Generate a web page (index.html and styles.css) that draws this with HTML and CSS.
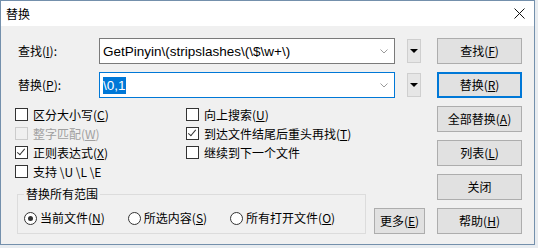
FILE: index.html
```html
<!DOCTYPE html>
<html lang="zh-CN">

<head>
    <meta charset="UTF-8">
    <meta name="viewport" content="width=device-width, initial-scale=1.0">
    <title>替换</title>
    <link rel="stylesheet" href="styles.css">
</head>

<body>
    <div class="window">
        <div class="titlebar">
            <span class="title">替换</span>
            <svg class="close" width="11" height="11" viewBox="0 0 11 11">
                <path d="M0.5 0.5 L10.5 10.5 M10.5 0.5 L0.5 10.5" stroke="#111" stroke-width="1" fill="none" />
            </svg>
        </div>

        <div class="content">
            <div class="left">
                <div class="field-row">
                    <label class="field-label">查找(<u>I</u>):</label>
                    <div class="combo">
                        <span class="combo-text">GetPinyin\(stripslashes\(\$\w+\)</span>
                        <svg class="chevron" width="8" height="5" viewBox="0 0 8 5">
                            <path d="M0.5 0.5 L4 4 L7.5 0.5" stroke="#9a9a9a" fill="none" />
                        </svg>
                    </div>
                    <div class="drop-btn"><span class="tri"></span></div>
                </div>
                <div class="field-row second">
                    <label class="field-label">替换(<u>P</u>):</label>
                    <div class="combo focused">
                        <span class="combo-text"><span class="selected">\0,1</span></span>
                        <svg class="chevron" width="8" height="5" viewBox="0 0 8 5">
                            <path d="M0.5 0.5 L4 4 L7.5 0.5" stroke="#9a9a9a" fill="none" />
                        </svg>
                    </div>
                    <div class="drop-btn"><span class="tri"></span></div>
                </div>

                <div class="options">
                    <div class="opt"><span class="box"></span>区分大小写(<u>C</u>)</div>
                    <div class="opt"><span class="box"></span>向上搜索(<u>U</u>)</div>
                    <div class="opt disabled"><span class="box"></span>整字匹配(<u>W</u>)</div>
                    <div class="opt"><span class="box checked"></span>到达文件结尾后重头再找(<u>T</u>)</div>
                    <div class="opt"><span class="box checked"></span>正则表达式(<u>X</u>)</div>
                    <div class="opt"><span class="box"></span>继续到下一个文件</div>
                    <div class="opt"><span class="box"></span>支持 \U \L \E</div>
                </div>

                <div class="bottom-row">
                    <fieldset class="scope">
                        <legend>替换所有范围</legend>
                        <div class="radios">
                            <div class="radio-item"><span class="radio on"></span>当前文件(<u>N</u>)</div>
                            <div class="radio-item"><span class="radio"></span>所选内容(<u>S</u>)</div>
                            <div class="radio-item"><span class="radio"></span>所有打开文件(<u>O</u>)</div>
                        </div>
                    </fieldset>
                    <button class="btn more">更多(<u>E</u>)</button>
                </div>
            </div>

            <div class="right">
                <button class="btn">查找(<u>F</u>)</button>
                <button class="btn default">替换(<u>R</u>)</button>
                <button class="btn">全部替换(<u>A</u>)</button>
                <button class="btn">列表(<u>L</u>)</button>
                <button class="btn">关闭</button>
                <button class="btn">帮助(<u>H</u>)</button>
            </div>
        </div>
    </div>
</body>

</html>
```

FILE: styles.css
```css
body {
    margin: 0;
    background-color: #e8ecf0;
    font-family: "Noto Sans CJK SC", "Noto Sans", sans-serif;
    font-size: 12px;
    color: #000;
}

u {
    text-decoration: underline;
    text-underline-offset: 1px;
}

.window {
    width: 533px;
    height: 243px;
    border: 1px solid #7490ac;
    background-color: #f0f0f0;
    display: flex;
    flex-direction: column;
}

.titlebar {
    height: 25px;
    background-color: #ffffff;
    display: flex;
    align-items: center;
    justify-content: space-between;
    padding: 0 9px 0 5px;
}

.title {
    font-size: 12px;
    line-height: 14px;
    padding-top: 1px;
}

.content {
    display: flex;
    padding-top: 12px;
}

.left {
    width: 435px;
}

.field-row {
    display: flex;
    align-items: center;
    height: 26px;
    margin-left: 17px;
}

.field-row.second {
    margin-top: 8px;
}

.field-label {
    width: 81px;
    line-height: 14px;
}

.combo {
    width: 296px;
    height: 26px;
    box-sizing: border-box;
    border: 1px solid #7a7a7a;
    background-color: #fff;
    display: flex;
    align-items: center;
    justify-content: space-between;
    padding: 0 6px 0 3px;
}

.combo.focused {
    border-color: #0078d7;
}

.combo-text {
    font-family: "Liberation Sans", sans-serif;
    font-size: 13.5px;
    line-height: 19px;
    white-space: nowrap;
}

.selected {
    background-color: #0078d7;
    color: #fff;
    padding: 1px 0;
}

.drop-btn {
    width: 14px;
    height: 24px;
    box-sizing: border-box;
    margin-left: 12px;
    border: 1px solid #cfcfcf;
    background-color: #e6e6e6;
    display: flex;
    align-items: center;
    justify-content: center;
}

.tri {
    width: 0;
    height: 0;
    border-left: 4px solid transparent;
    border-right: 4px solid transparent;
    border-top: 4px solid #000;
}

.options {
    display: grid;
    grid-template-columns: 171px 1fr;
    grid-auto-rows: 19px;
    margin: 7px 0 0 14px;
}

.opt {
    display: flex;
    align-items: center;
    line-height: 14px;
    white-space: nowrap;
}

.box {
    width: 13px;
    height: 13px;
    box-sizing: border-box;
    border: 1px solid #333;
    background-color: #fff;
    margin-right: 5px;
    position: relative;
}

.box.checked::after {
    content: "";
    position: absolute;
    left: 3px;
    top: 0px;
    width: 3px;
    height: 7px;
    border-right: 1px solid #333;
    border-bottom: 1px solid #333;
    transform: rotate(40deg);
}

.opt.disabled {
    color: #a0a0a0;
}

.opt.disabled .box {
    border-color: #cccccc;
    background-color: #f0f0f0;
}

.bottom-row {
    display: flex;
    align-items: flex-end;
    margin: 6px 0 0 16px;
}

.scope {
    width: 349px;
    box-sizing: border-box;
    margin: 0;
    padding: 0 6px 7px 6px;
    border: 1px solid #dcdcdc;
}

.scope legend {
    padding: 0 2px;
    line-height: 14px;
}

.radios {
    display: flex;
    gap: 23px;
    margin-top: 9px;
    height: 16px;
    align-items: center;
}

.radio-item {
    display: flex;
    align-items: center;
    line-height: 14px;
    white-space: nowrap;
}

.radio {
    width: 13px;
    height: 13px;
    box-sizing: border-box;
    border: 1px solid #333;
    border-radius: 50%;
    background-color: #fff;
    margin-right: 3px;
    display: flex;
    align-items: center;
    justify-content: center;
}

.radio.on::after {
    content: "";
    width: 5px;
    height: 5px;
    border-radius: 50%;
    background-color: #333;
}

.btn {
    font-family: "Noto Sans CJK SC", "Noto Sans", sans-serif;
    font-size: 12px;
    line-height: 14px;
    height: 26px;
    width: 85px;
    padding: 0;
    box-sizing: border-box;
    border: 1px solid #adadad;
    background-color: #e1e1e1;
    color: #000;
}

.btn.default {
    border: 2px solid #0078d7;
}

.btn.more {
    width: 51px;
    margin-left: 8px;
}

.right {
    display: flex;
    flex-direction: column;
    gap: 8px;
    margin-left: 1px;
}
```
